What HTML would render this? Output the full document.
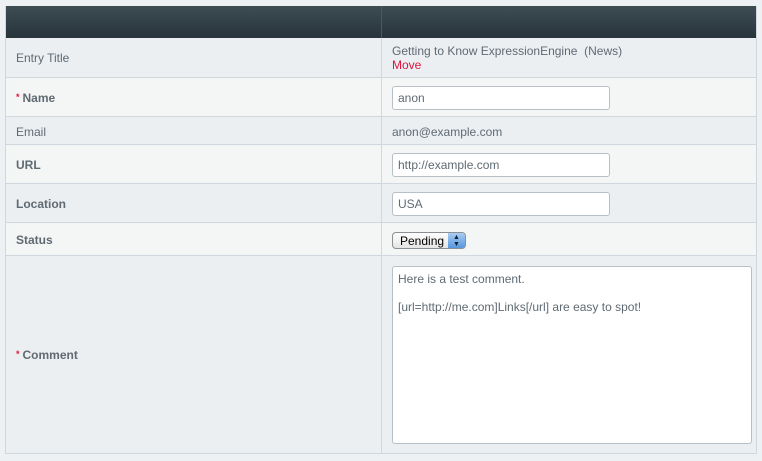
<!DOCTYPE html>
<html><head><style>
*{margin:0;padding:0;box-sizing:border-box}
body{width:762px;height:461px;background:#eef1f3;font-family:"Liberation Sans",sans-serif;font-size:12px;color:#5f6a72;position:relative;overflow:hidden}
.t{position:absolute;left:5px;top:6px;width:752px;height:448px;border:1px solid #d0d7dd;border-top:none;}
.hd{position:absolute;left:5px;top:6px;width:752px;height:32px;background:linear-gradient(#3e4c54,#27343b)}
.hd:after{content:"";position:absolute;left:376px;top:0;width:1px;height:32px;background:#4b5960}
.r{position:absolute;left:6px;width:750px;border-bottom:1px solid #d0d7dd}
.a{background:#ebeff2}.b{background:#f4f5f5}
.v{position:absolute;left:381px;top:38px;width:1px;height:415px;background:#d0d7dd}
.l{position:absolute;left:16px}
.bd{font-weight:bold}
.s{color:#e0133f;font-size:9px;position:relative;top:-2px;margin-right:3px}
.ip{position:absolute;left:392px;width:218px;height:24px;border:1px solid #b8c0c6;border-radius:3px;background:#fff;padding:4px 5px;font-size:12px;color:#5f6a72}
.x{position:absolute;left:392px}
</style></head><body>
<div class="hd"></div>
<div class="r a" style="top:38px;height:40px"></div>
<div class="r b" style="top:78px;height:39px"></div>
<div class="r a" style="top:117px;height:28px"></div>
<div class="r b" style="top:145px;height:39px"></div>
<div class="r a" style="top:184px;height:39px"></div>
<div class="r b" style="top:223px;height:33px"></div>
<div class="r a" style="top:256px;height:198px"></div>
<div class="t"></div>
<div class="v"></div>
<div class="l" style="top:51px">Entry Title</div>
<div class="x" style="top:44px">Getting to Know ExpressionEngine&nbsp; (News)<br><span style="color:#e0133f">Move</span></div>
<div class="l bd" style="top:91px"><span class="s">*</span>Name</div>
<div class="ip" style="top:86px">anon</div>
<div class="l" style="top:125px">Email</div>
<div class="x" style="top:125px">anon@example.com</div>
<div class="l bd" style="top:158px">URL</div>
<div class="ip" style="top:153px">http://example.com</div>
<div class="l bd" style="top:197px">Location</div>
<div class="ip" style="top:192px">USA</div>
<div class="l bd" style="top:233px">Status</div>
<div style="position:absolute;left:392px;top:232px;width:74px;height:17px;border:1px solid #8a8f94;border-radius:4px;background:linear-gradient(#fff,#e4e4e4);font-size:12px;color:#000;padding:1px 0 0 7px;overflow:hidden">Pending<div style="position:absolute;right:0;top:0;width:17px;height:17px;background:linear-gradient(#a8cdf2,#4d8fdc);color:#123;font-size:7px;line-height:7px;text-align:center;padding-top:1px">▲<br>▼</div></div>
<div class="l bd" style="top:348px"><span class="s">*</span>Comment</div>
<div style="position:absolute;left:392px;top:266px;width:360px;height:178px;border:1px solid #b8c0c6;border-radius:3px;background:#fff;padding:5px 5px;line-height:14px">Here is a test comment.<br><br>[url=http://me.com]Links[/url] are easy to spot!</div>
</body></html>
